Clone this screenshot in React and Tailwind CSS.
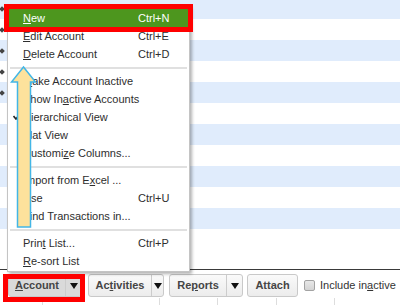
import React from "react";

const menuItems = [
  { label: <><u>N</u>ew</>, key: "Ctrl+N", active: true },
  { label: <><u>E</u>dit Account</>, key: "Ctrl+E" },
  { label: <><u>D</u>elete Account</>, key: "Ctrl+D" },
  "sep",
  { label: <><u>M</u>ake Account Inactive</> },
  { label: <>Show In<u>a</u>ctive Accounts</> },
  { label: <><u>H</u>ierarchical View</>, checked: true },
  { label: <><u>F</u>lat View</> },
  { label: <>Customi<u>z</u>e Columns...</> },
  "sep",
  { label: <><u>I</u>mport from E<u>x</u>cel ...</> },
  { label: <><u>U</u>se</>, key: "Ctrl+U" },
  { label: <><u>F</u>ind Transactions in...</> },
  "sep",
  { label: <>Prin<u>t</u> List...</>, key: "Ctrl+P" },
  { label: <><u>R</u>e-sort List</> },
];

// list rows, every other one tinted; first five carry a tree marker
const rows = Array.from({ length: 12 }, (_, i) => i);

function DropArrow() {
  return (
    <svg width="8" height="6" viewBox="0 0 8 6">
      <polygon points="0,0 8,0 4,6" fill="#111" />
    </svg>
  );
}

function SplitButton({ label, labelWidth, arrowWidth, pressed, className = "" }) {
  return (
    <div
      className={`flex h-[23px] shrink-0 rounded-[3px] border border-[#c9c9c9] ${
        pressed ? "bg-[#dadada]" : "bg-gradient-to-b from-[#fafafa] to-[#ececec]"
      } ${className}`}
    >
      <div
        className="flex items-center justify-center whitespace-nowrap text-[11px] font-bold text-[#454545]"
        style={{ width: labelWidth }}
      >
        {label}
      </div>
      <div className="w-px bg-[#cccccc]" />
      <div className="flex items-center justify-center" style={{ width: arrowWidth }}>
        <DropArrow />
      </div>
    </div>
  );
}

export default function App() {
  return (
    <div className="relative h-[305px] w-[400px] overflow-hidden bg-white font-['Liberation_Sans',Arial,sans-serif]">
      {/* Account list */}
      <div className="h-[269px] overflow-hidden">
        <div className="-mt-[2px] flex flex-col">
          {rows.map((i) => (
            <div
              key={i}
              className={`flex h-[21px] items-center ${i % 2 === 0 ? "bg-[#e0ecfc]" : "bg-white"}`}
            >
              {i < 5 && <div className="h-[4px] w-[4px] rotate-45 bg-[#444]" />}
            </div>
          ))}
        </div>
      </div>
      <div className="h-px bg-[#3a3a3a]" />

      {/* Toolbar */}
      <div className="flex h-[28px] items-start pl-[8px] pt-[4px]">
        <SplitButton label={<><u>A</u>ccount</>} labelWidth={56} arrowWidth={15} pressed />
        <SplitButton label={<>Ac<u>t</u>ivities</>} labelWidth={62} arrowWidth={11} className="ml-[6px]" />
        <SplitButton label={<>Re<u>p</u>orts</>} labelWidth={56} arrowWidth={15} className="ml-[5px]" />
        <div className="ml-[4px] flex h-[23px] w-[51px] shrink-0 items-center justify-center rounded-[3px] border border-[#c9c9c9] bg-gradient-to-b from-[#fafafa] to-[#ececec] text-[11px] font-bold text-[#454545]">
          Attach
        </div>
        <div className="ml-[6px] flex h-[23px] shrink-0 items-center gap-[5px]">
          <div className="h-[11px] w-[11px] rounded-[2px] border border-[#a3a3a3] bg-gradient-to-b from-[#e8e8e8] to-[#d4d4d4]" />
          <span className="whitespace-nowrap text-[11px] text-[#333]">
            Include in<u>a</u>ctive
          </span>
        </div>
      </div>
      <div className="flex h-[7px]">
        <div className="w-[43px] border-r border-[#dddddd]" />
        <div className="w-[117px] border-r border-[#dddddd]" />
        <div className="w-[58px] border-r border-[#dddddd]" />
        <div className="w-[59px] border-r border-[#dddddd]" />
        <div className="w-[58px] border-r border-[#dddddd]" />
      </div>

      {/* Context menu */}
      <div className="absolute left-[7px] top-[6px] w-[183px] border border-[#c4c4c4] bg-white px-[1px] pb-[1px] pt-[2px] text-[11px] text-[#2e2e2e] shadow-[2px_2px_3px_rgba(0,0,0,0.3)]">
        {menuItems.map((item, i) =>
          item === "sep" ? (
            <div key={i} className="flex h-[9px] items-center px-[1px]">
              <div className="h-[2px] w-full bg-[#e0e0e0]" />
            </div>
          ) : (
            <div
              key={i}
              className={`flex h-[18px] items-center pl-[1px] leading-[18px] ${
                item.active ? "bg-[#4d961e] text-white outline-[5px] outline-solid outline-[#ff0000]" : ""
              }`}
            >
              <div className="flex w-[13px] items-center justify-center">
                {item.checked && (
                  <svg width="7" height="6" viewBox="0 0 7 6">
                    <path d="M0.5 2 L3 5 L6.5 0.5" stroke="#222" strokeWidth="1.6" fill="none" />
                  </svg>
                )}
              </div>
              <span className="w-[115px] whitespace-nowrap">{item.label}</span>
              {item.key && <span>{item.key}</span>}
            </div>
          )
        )}
      </div>

      {/* Up arrow annotation */}
      <svg className="absolute left-[10px] top-[65px]" width="28" height="165" viewBox="0 0 28 165">
        <polygon
          points="13.5,2 1.5,17 7.5,17 7.5,162 20.5,162 20.5,17 25.5,17"
          fill="#fde29c"
          stroke="#43b6e6"
          strokeWidth="1.5"
        />
      </svg>

      {/* Highlight around Account button */}
      <div className="absolute left-[3px] top-[274px] h-[28px] w-[82px] border-[5px] border-[#ff0000]" />
    </div>
  );
}
